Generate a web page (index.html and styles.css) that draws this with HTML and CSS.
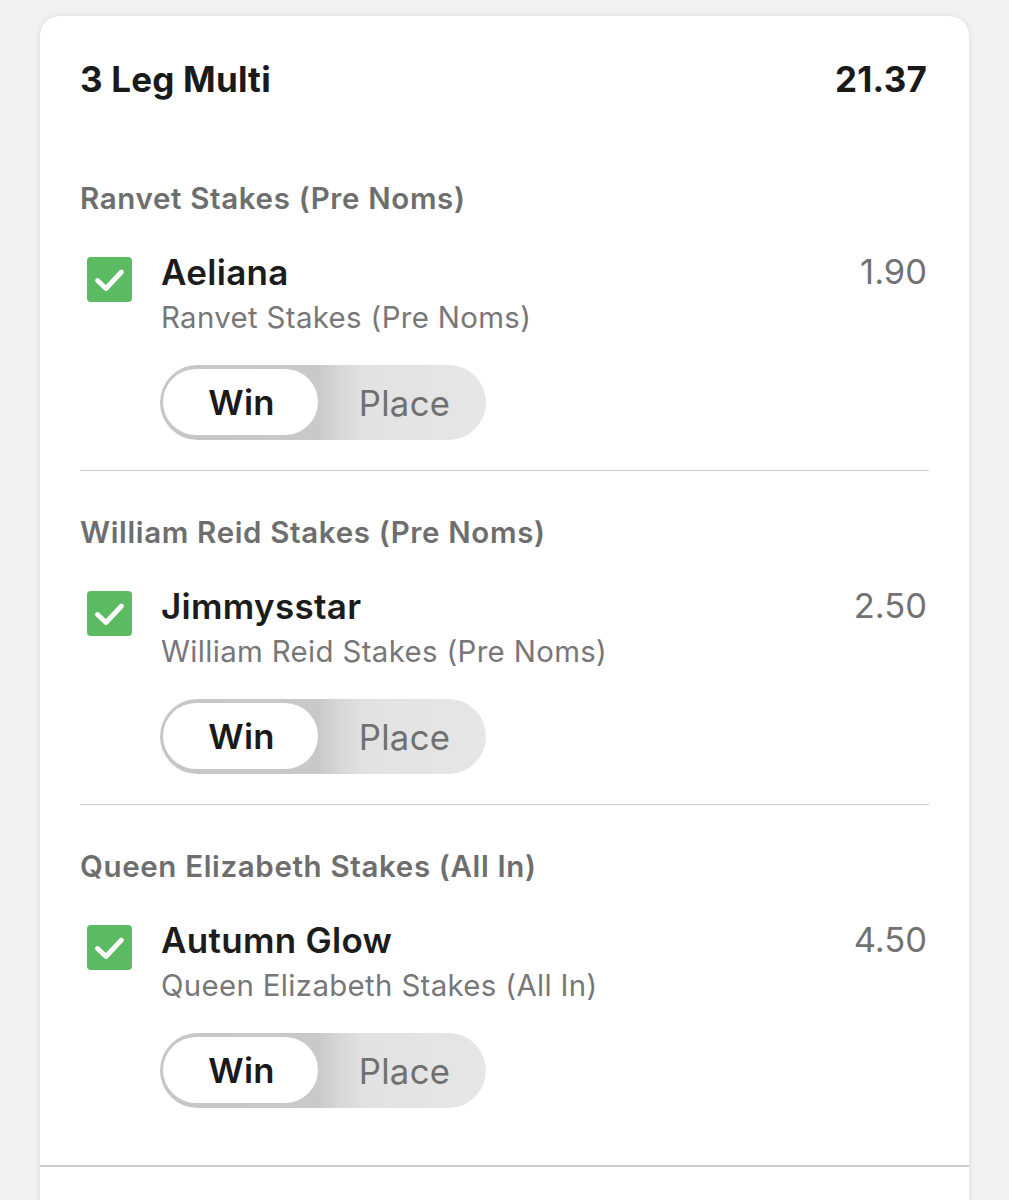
FILE: index.html
```html
<!DOCTYPE html>
<html lang="en">
<head>
<meta charset="utf-8">
<title>3 Leg Multi</title>
<link rel="stylesheet" href="styles.css">
</head>
<body>
<div class="card">
  <div class="card-head">
    <div class="title">3 Leg Multi</div>
    <div class="total">21.37</div>
  </div>

  <div class="leg">
    <div class="event">Ranvet Stakes (Pre Noms)</div>
    <div class="row">
      <div class="check"><svg viewBox="0 0 45 45" width="45" height="45"><polyline points="10.5,23.5 19,31.5 34.5,15" fill="none" stroke="#fff" stroke-width="4.8" stroke-linecap="round" stroke-linejoin="round"/></svg></div>
      <div class="info">
        <div class="name-line"><span class="name">Aeliana</span><span class="odds">1.90</span></div>
        <div class="sub">Ranvet Stakes (Pre Noms)</div>
        <div class="toggle"><span class="opt on">Win</span><span class="opt">Place</span></div>
      </div>
    </div>
  </div>

  <div class="leg">
    <div class="event">William Reid Stakes (Pre Noms)</div>
    <div class="row">
      <div class="check"><svg viewBox="0 0 45 45" width="45" height="45"><polyline points="10.5,23.5 19,31.5 34.5,15" fill="none" stroke="#fff" stroke-width="4.8" stroke-linecap="round" stroke-linejoin="round"/></svg></div>
      <div class="info">
        <div class="name-line"><span class="name">Jimmysstar</span><span class="odds">2.50</span></div>
        <div class="sub">William Reid Stakes (Pre Noms)</div>
        <div class="toggle"><span class="opt on">Win</span><span class="opt">Place</span></div>
      </div>
    </div>
  </div>

  <div class="leg last">
    <div class="event">Queen Elizabeth Stakes (All In)</div>
    <div class="row">
      <div class="check"><svg viewBox="0 0 45 45" width="45" height="45"><polyline points="10.5,23.5 19,31.5 34.5,15" fill="none" stroke="#fff" stroke-width="4.8" stroke-linecap="round" stroke-linejoin="round"/></svg></div>
      <div class="info">
        <div class="name-line"><span class="name">Autumn Glow</span><span class="odds">4.50</span></div>
        <div class="sub">Queen Elizabeth Stakes (All In)</div>
        <div class="toggle"><span class="opt on">Win</span><span class="opt">Place</span></div>
      </div>
    </div>
  </div>

  <div class="card-foot"></div>
</div>
</body>
</html>
```

FILE: styles.css
```css
* { box-sizing: border-box; }
html, body {
  margin: 0;
  padding: 0;
  background: #f2f2f2;
  font-family: Inter, "Noto Sans", "Liberation Sans", sans-serif;
}
body {
  padding-top: 16px;
  height: 1200px;
  overflow: hidden;
}
.card {
  margin-left: 40px;
  width: 929px;
  background: #fff;
  border-radius: 20px 20px 0 0;
  box-shadow: 0 0 6px rgba(0,0,0,0.10);
  min-height: 1300px;
}
.card-head {
  display: flex;
  justify-content: space-between;
  align-items: center;
  padding: 43px 42px 0 40px;
  font-size: 35px;
  font-weight: 700;
  line-height: 40px;
  color: #1a1a1a;
  letter-spacing: 0.2px;
}
.leg {
  margin: 0 40px;
  padding-top: 43px;
  padding-bottom: 30px;
  border-bottom: 1px solid #cfcfcf;
}
.card-head + .leg { padding-top: 81px; }
.leg.last { border-bottom: none; padding-bottom: 57px; }
.event {
  font-size: 29.5px;
  font-weight: 600;
  line-height: 36px;
  color: #6e6e6e;
  letter-spacing: 0.65px;
}
.row {
  display: flex;
  margin-top: 38px;
}
.check {
  width: 45px;
  height: 45px;
  margin: 3px 29px 0 7px;
  background: #5cba62;
  border-radius: 4px;
  flex: none;
}
.check svg { display: block; }
.info { flex: 1; }
.name-line {
  display: flex;
  justify-content: space-between;
  line-height: 36px;
}
.name {
  font-size: 35px;
  font-weight: 600;
  color: #1c1c1c;
  letter-spacing: 0.3px;
}
.odds {
  font-size: 34.5px;
  font-weight: 400;
  color: #727272;
  margin-right: 2px;
}
.sub {
  margin-top: 12px;
  font-size: 29.4px;
  line-height: 32px;
  color: #777;
  letter-spacing: 0.35px;
}
.toggle {
  margin-top: 31px;
  margin-left: -1px;
  width: 326px;
  height: 75px;
  border-radius: 38px;
  padding: 4px 3px 4px 3px;
  display: flex;
  align-items: stretch;
  background: linear-gradient(90deg, #c6c6c6 0px, #c9c9c9 158px, #d6d6d6 178px, #e2e2e2 205px, #e6e6e6 326px);
}
.opt {
  display: flex;
  align-items: center;
  justify-content: center;
  font-size: 34.7px;
  color: #707070;
  flex: 1;
  padding-left: 8px;
  letter-spacing: 0.3px;
}
.opt.on {
  flex: none;
  width: 155px;
  padding-left: 2px;
  background: #fff;
  border-radius: 34px;
  color: #1a1a1a;
  font-weight: 600;
  margin-bottom: 1px;
}
.card-foot {
  border-top: 2px solid #cdcdcd;
}
```
